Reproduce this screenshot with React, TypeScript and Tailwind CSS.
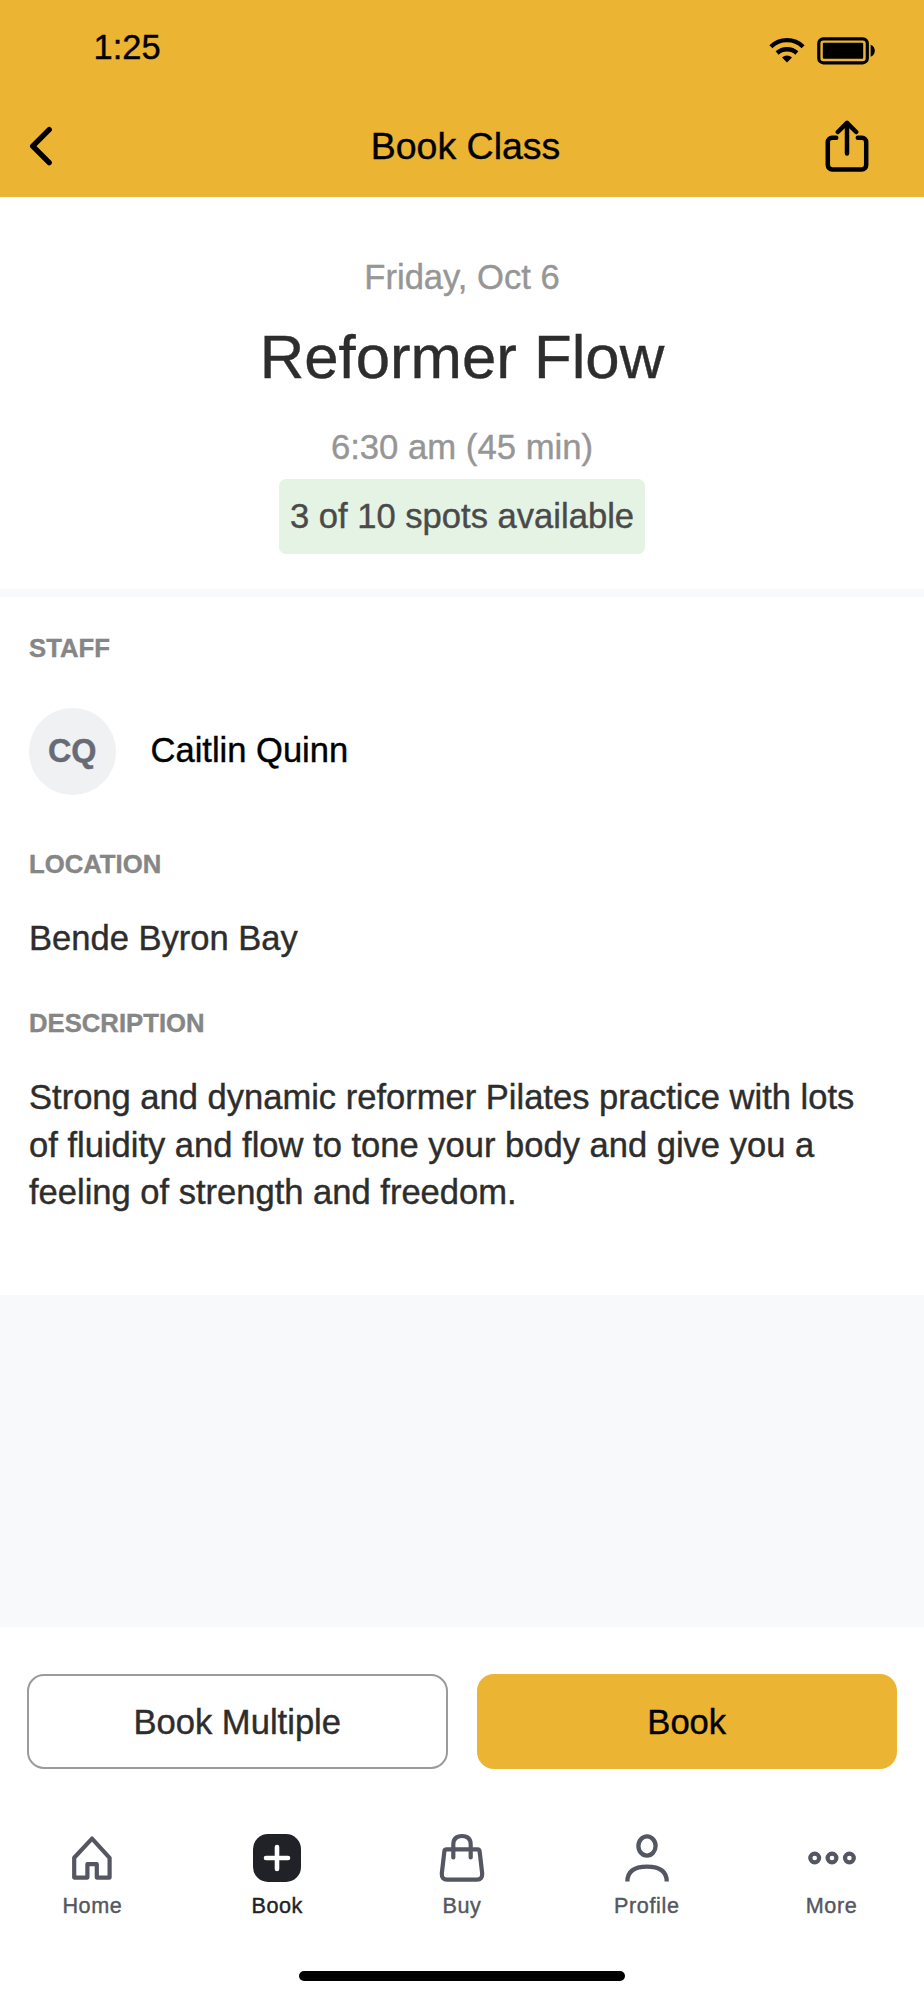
import type { ReactNode } from "react"

interface Tab {
  label: string
  icon: ReactNode
  active?: boolean
}

function WifiIcon() {
  return (
    <svg width="36" height="26" viewBox="0 0 36 26" fill="none" stroke="currentColor" strokeWidth="4.4">
      <path d="M1.9 9.7C10.8 .9 25.2 .9 34.1 9.7" />
      <path d="M8.1 16C13.8 10.9 22.2 10.9 27.9 16" />
      <path d="M18 25.4L13 20.5C15.8 17.8 20.2 17.8 23 20.5Z" fill="currentColor" stroke="none" />
    </svg>
  )
}

function BatteryIcon() {
  return (
    <svg width="58" height="28" viewBox="0 0 58 28" fill="none">
      <rect x="1.8" y="1.8" width="48.5" height="24" rx="4.5" stroke="currentColor" strokeWidth="3.2" />
      <rect x="5.8" y="5.8" width="40.4" height="16" rx="1" fill="currentColor" />
      <path d="M53.6 7.8C56.6 9 57.8 11.2 57.8 13.8S56.6 18.6 53.6 19.8Z" fill="currentColor" />
    </svg>
  )
}

function BackIcon() {
  return (
    <svg width="24" height="40" viewBox="0 0 24 40" fill="none" stroke="currentColor" strokeWidth="5.4" strokeLinecap="round" strokeLinejoin="round">
      <path d="M20.2 3.7L3.7 20.2L20.2 36.6" />
    </svg>
  )
}

function ShareIcon() {
  return (
    <svg width="44" height="52" viewBox="0 0 44 52" fill="none" stroke="currentColor" strokeWidth="4.5" strokeLinecap="round" strokeLinejoin="round">
      <path d="M22 33.5V3.2" />
      <path d="M12.8 12L22 2.8L31.2 12" />
      <path d="M11.2 17.8H7A4.2 4.2 0 0 0 2.8 22V45A4.4 4.4 0 0 0 7.2 49.4H36.8A4.4 4.4 0 0 0 41.2 45V22A4.2 4.2 0 0 0 37 17.8H32.8" />
    </svg>
  )
}

function HomeIcon() {
  return (
    <svg width="52" height="52" viewBox="0 0 52 52" fill="none" stroke="currentColor" strokeWidth="4.2" strokeLinejoin="round">
      <path d="M26 6.6L43.6 25.8V45.6H30.8V32.2H21.4V45.6H8.2V25.8Z" />
    </svg>
  )
}

function PlusIcon() {
  return (
    <svg width="52" height="52" viewBox="0 0 52 52" fill="none">
      <rect x="2" y="2" width="48" height="48" rx="15" fill="currentColor" />
      <path d="M26 15V37M15 26H37" stroke="white" strokeWidth="4.6" strokeLinecap="round" />
    </svg>
  )
}

function BagIcon() {
  return (
    <svg width="52" height="52" viewBox="0 0 52 52" fill="none" stroke="currentColor" strokeWidth="4.2" strokeLinecap="round" strokeLinejoin="round">
      <path d="M10.5 17.4H41.5Q43.4 17.4 43.6 19.3L46.2 41.5Q46.4 47.6 41 47.6H11Q5.6 47.6 5.8 41.5L8.4 19.3Q8.6 17.4 10.5 17.4Z" />
      <path d="M17.3 25.4V12.7Q17.3 4 26 4T34.7 12.7V25.4" />
    </svg>
  )
}

function ProfileIcon() {
  return (
    <svg width="52" height="52" viewBox="0 0 52 52" fill="none" stroke="currentColor" strokeWidth="4.3">
      <ellipse cx="26" cy="14" rx="8.6" ry="9.6" />
      <path d="M6.4 49.6C6.4 40 13 34.7 26 34.7S45.7 40 45.7 49.6" />
    </svg>
  )
}

function MoreIcon() {
  return (
    <svg width="52" height="52" viewBox="0 0 52 52" fill="none" stroke="currentColor" strokeWidth="4.2">
      <circle cx="8.7" cy="26" r="4.4" />
      <circle cx="26" cy="26" r="4.4" />
      <circle cx="43.4" cy="26" r="4.4" />
    </svg>
  )
}

const tabs: Tab[] = [
  { label: "Home", icon: <HomeIcon /> },
  { label: "Book", icon: <PlusIcon />, active: true },
  { label: "Buy", icon: <BagIcon /> },
  { label: "Profile", icon: <ProfileIcon /> },
  { label: "More", icon: <MoreIcon /> },
]

function SectionLabel({ children }: { children: ReactNode }) {
  return <h2 className="text-[25.7px] leading-8 font-bold uppercase text-[#868686]">{children}</h2>
}

function Header() {
  return (
    <header className="h-[196.5px] bg-[#ebb533] text-black">
      <div className="flex h-24 items-start justify-between pl-[93.5px] pr-[49px]">
        <span className="pt-[23px] text-[34.5px] leading-[48px]">1:25</span>
        <div className="flex gap-3 pt-[37px]">
          <WifiIcon />
          <BatteryIcon />
        </div>
      </div>
      <div className="grid h-[100px] grid-cols-[1fr_auto_1fr] items-center pl-[29px] pr-[55px]">
        <button aria-label="Back" className="justify-self-start">
          <BackIcon />
        </button>
        <h1 className="pl-[33px] text-[37.5px] leading-[48px]">Book Class</h1>
        <button aria-label="Share" className="justify-self-end">
          <ShareIcon />
        </button>
      </div>
    </header>
  )
}

function ClassSummary() {
  return (
    <section className="flex h-[392px] flex-col items-center bg-white pt-[56px]">
      <p className="text-[34.6px] leading-[48px] text-[#969696]">Friday, Oct 6</p>
      <h2 className="mt-5 text-[61.7px] leading-[72px] text-[#2d2d2d]">Reformer Flow</h2>
      <p className="mt-[30px] text-[34.7px] leading-[48px] text-[#969696]">6:30 am (45 min)</p>
      <div className="mt-2 flex h-[75px] w-[366px] items-center justify-center rounded-[7px] bg-[#e4f3e4] text-[34.6px] leading-[48px] text-[#4a4a4a]">
        3 of 10 spots available
      </div>
    </section>
  )
}

function ClassDetails() {
  return (
    <section className="mt-[8.5px] h-[697.5px] bg-white px-[29px] pt-[35px] text-[34.54px] leading-[47.5px] text-[#2d2d2d]">
      <SectionLabel>Staff</SectionLabel>
      <div className="mt-11 flex items-center gap-[35px]">
        <div className="flex h-[86.5px] w-[86.5px] items-center justify-center rounded-full bg-[#f0f1f3] pt-px text-[32.4px] font-bold text-[#686a75]">
          CQ
        </div>
        <span className="pb-0.5 text-[34.54px] text-black">Caitlin Quinn</span>
      </div>
      <div className="mt-[53px]">
        <SectionLabel>Location</SectionLabel>
        <p className="mt-[35px]">Bende Byron Bay</p>
      </div>
      <div className="mt-[45px]">
        <SectionLabel>Description</SectionLabel>
        <p className="mt-[35px] w-[840px]">
          Strong and dynamic reformer Pilates practice with lots of fluidity and flow to tone your body and give you a
          feeling of strength and freedom.
        </p>
      </div>
    </section>
  )
}

function TabBar() {
  return (
    <nav className="mt-[62.5px] grid grid-cols-5">
      {tabs.map((tab) => (
        <a
          key={tab.label}
          className={
            tab.active ? "flex flex-col items-center text-[#212227]" : "flex flex-col items-center text-[#545761]"
          }
        >
          {tab.icon}
          <span className="mt-2 text-[21.6px] leading-7 tracking-[0.6px]">{tab.label}</span>
        </a>
      ))}
    </nav>
  )
}

export default function App() {
  return (
    <div className="flex h-[2000px] w-[924px] flex-col overflow-hidden bg-[#f8f9fb] font-['Liberation_Sans',Arial,sans-serif] [-webkit-text-stroke:0.4px]">
      <Header />
      <ClassSummary />
      <ClassDetails />
      <footer className="mt-auto h-[373.5px] bg-white pt-[47.5px]">
        <div className="grid grid-cols-2 gap-[29px] px-[27px] text-[34.6px] leading-[48px]">
          <button className="h-[95px] rounded-[17px] border-2 border-[#9b9b9b] text-[#2d2d2d]">Book Multiple</button>
          <button className="h-[95px] rounded-[17px] bg-[#ebb533] text-black">Book</button>
        </div>
        <TabBar />
        <div className="mx-auto mt-[51px] h-[10px] w-[326px] rounded-full bg-black" />
      </footer>
    </div>
  )
}
